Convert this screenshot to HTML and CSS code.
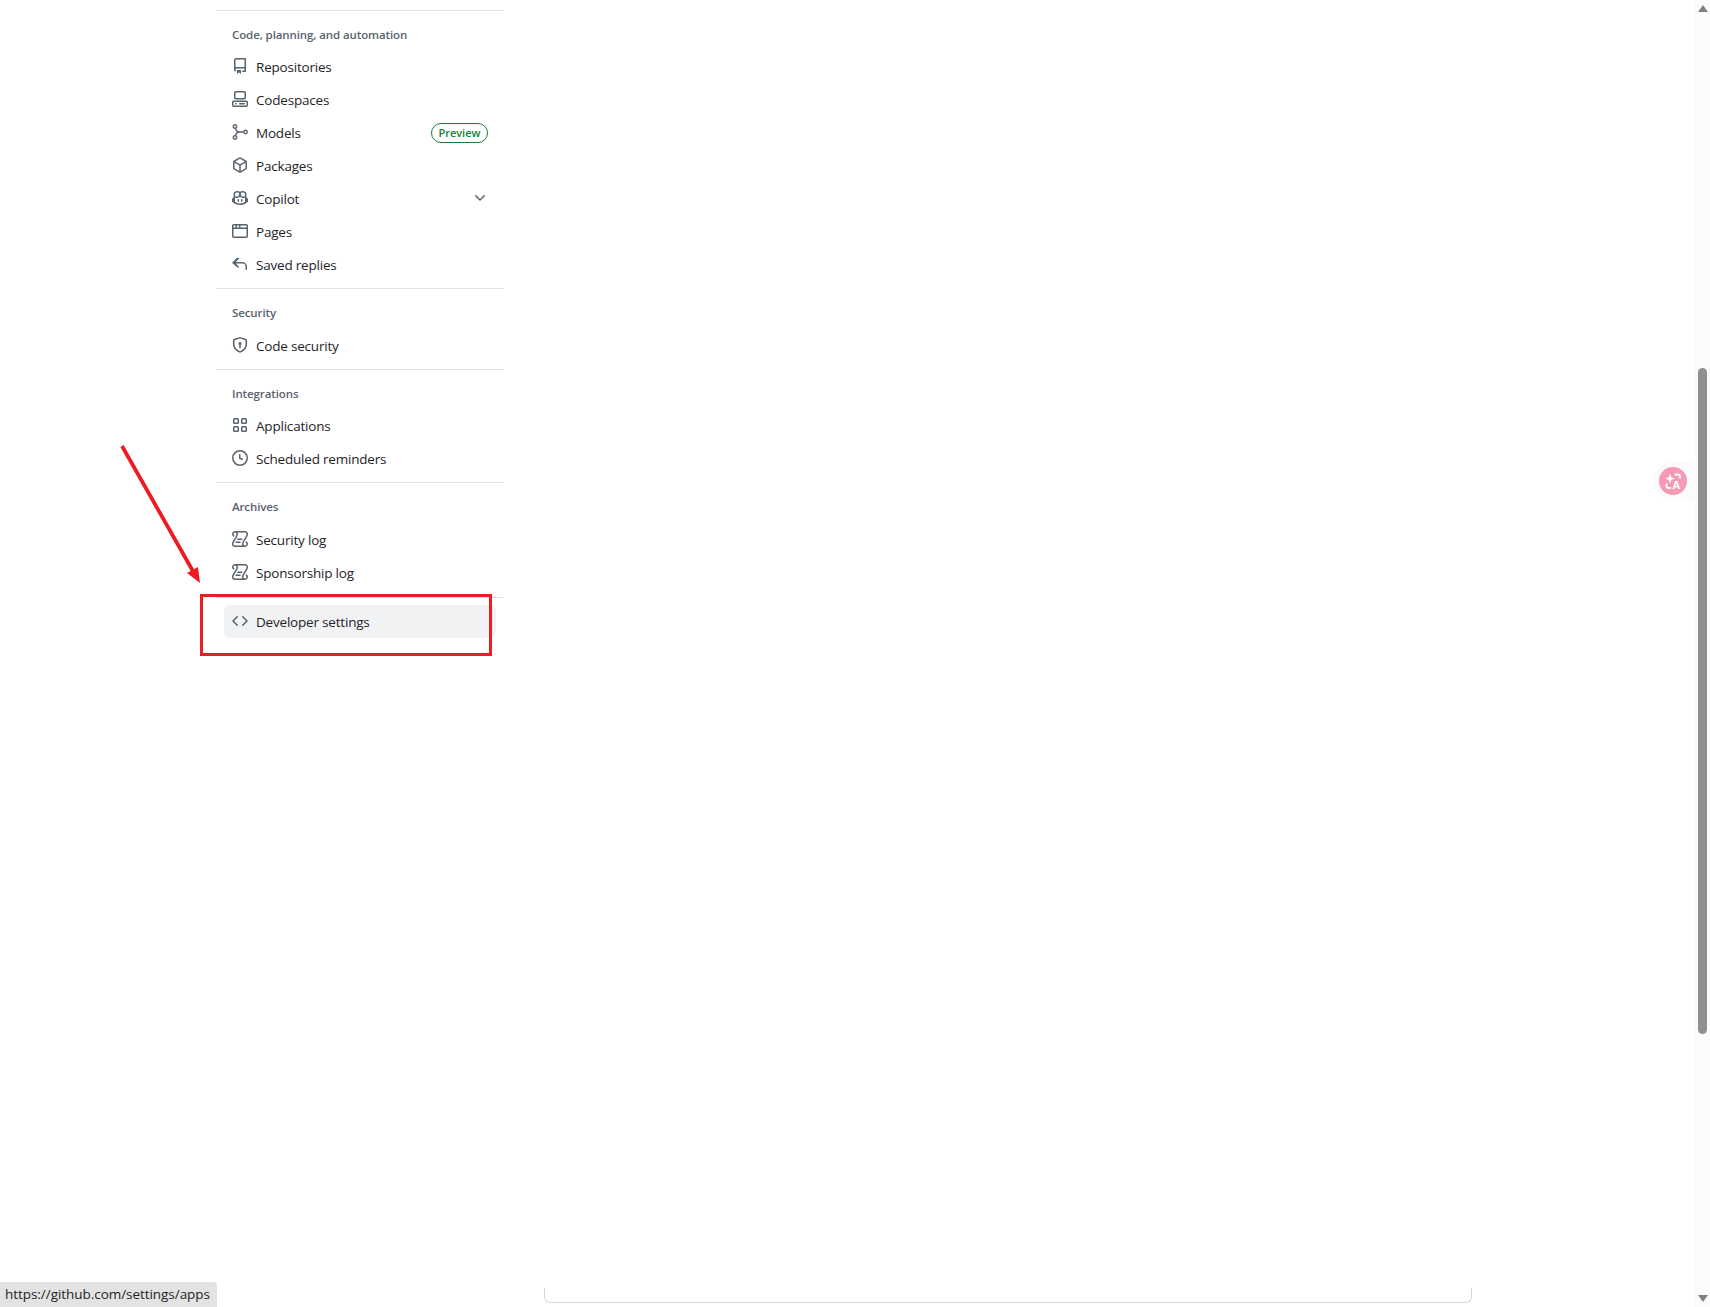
FILE: index.html
```html
<!DOCTYPE html>
<html lang="en">
<head>
<meta charset="utf-8">
<title>Settings</title>
<link rel="stylesheet" href="styles.css">
</head>
<body>
<div class="page">
  <main class="content">
    <nav class="sidebar">
      <section class="group">
        <h2 class="heading">Code, planning, and automation</h2>
        <a class="row"><svg class="icon" viewBox="0 0 16 16"><path d="M2 2.5A2.5 2.5 0 0 1 4.500 0h8.750a.75.75 0 0 1 .75.75v12.500a.75.75 0 0 1-.75.75h-2.500a.75.75 0 0 1 0-1.500h1.750v-2h-8a1 1 0 0 0-.714 1.700.75.75 0 1 1-1.072 1.050A2.495 2.495 0 0 1 2 11.500Zm10.500-1h-8a1 1 0 0 0-1 1v6.708A2.486 2.486 0 0 1 4.500 9h8ZM5 12.250a.25.25 0 0 1 .25-.25h3.500a.25.25 0 0 1 .25.25v3.250a.25.25 0 0 1-.4.2l-1.450-1.087a.249.249 0 0 0-.3 0L5.400 15.700a.25.25 0 0 1-.4-.2Z"/></svg><span>Repositories</span></a>
        <a class="row"><svg class="icon" viewBox="0 0 16 16"><path d="M0 11.250c0-.966.784-1.750 1.750-1.750h12.500c.966 0 1.750.784 1.750 1.750v3A1.750 1.750 0 0 1 14.250 16H1.750A1.750 1.750 0 0 1 0 14.250Zm2-9.500C2 .784 2.784 0 3.750 0h8.500C13.216 0 14 .784 14 1.750v5a1.750 1.750 0 0 1-1.750 1.750h-8.500A1.750 1.750 0 0 1 2 6.750Zm1.750-.25a.25.25 0 0 0-.25.25v5c0 .138.112.25.25.25h8.500a.25.25 0 0 0 .25-.25v-5a.25.25 0 0 0-.25-.25Zm-2 9.500a.25.25 0 0 0-.25.25v3c0 .138.112.25.25.25h12.500a.25.25 0 0 0 .25-.25v-3a.25.25 0 0 0-.25-.25Z"/><path d="M7 12.750a.75.75 0 0 1 .75-.75h4.500a.75.75 0 0 1 0 1.500h-4.500a.75.75 0 0 1-.75-.75Zm-4 0a.75.75 0 0 1 .75-.75h.5a.75.75 0 0 1 0 1.500h-.5a.75.75 0 0 1-.75-.75Z"/></svg><span>Codespaces</span></a>
        <a class="row"><svg class="icon icon-line" viewBox="0 0 16 16"><circle cx="3" cy="2.500" r="1.750"/><circle cx="3" cy="13.500" r="1.750"/><circle cx="13.500" cy="8" r="1.750"/><path d="M3.400 4.200C3.900 6.800 5.500 8 8 8h3.750M3.400 11.800C3.900 9.200 5.500 8 8 8"/></svg><span>Models</span><span class="badge">Preview</span></a>
        <a class="row"><svg class="icon" viewBox="0 0 16 16"><path d="m8.878.392 5.250 3.045c.54.314.872.890.872 1.514v6.098a1.750 1.750 0 0 1-.872 1.514l-5.250 3.045a1.750 1.750 0 0 1-1.756 0l-5.250-3.045A1.750 1.750 0 0 1 1 11.049V4.951c0-.624.332-1.201.872-1.514L7.122.392a1.750 1.750 0 0 1 1.756 0ZM7.875 1.690l-4.630 2.685L8 7.133l4.755-2.758-4.630-2.685a.248.248 0 0 0-.250 0ZM2.500 5.677v5.372c0 .09.047.171.125.216l4.625 2.683V8.432Zm6.250 8.271 4.625-2.683a.25.25 0 0 0 .125-.216V5.677L8.750 8.432Z"/></svg><span>Packages</span></a>
        <a class="row"><svg class="icon" viewBox="0 0 16 16"><path d="M7.998 15.035c-4.562 0-7.873-2.914-7.998-3.749V9.338c.085-.628.677-1.686 1.588-2.065.013-.07.024-.143.036-.218.029-.183.06-.384.126-.612-.201-.508-.254-1.084-.254-1.656 0-.87.128-1.769.693-2.484.579-.733 1.494-1.124 2.724-1.261 1.206-.134 2.262.034 2.944.765.05.053.096.108.139.165.044-.057.094-.112.143-.165.682-.731 1.738-.899 2.944-.765 1.23.137 2.145.528 2.724 1.261.566.715.693 1.614.693 2.484 0 .572-.053 1.148-.254 1.656.066.228.098.429.126.612.012.076.024.148.037.218.924.385 1.522 1.471 1.591 2.095v1.872c0 .766-3.351 3.795-8.002 3.795Zm0-1.485c2.28 0 4.584-1.11 5.002-1.433V7.862l-.023-.116c-.49.21-1.075.291-1.727.291-1.146 0-2.059-.327-2.71-.991A3.222 3.222 0 0 1 8 6.303a3.24 3.24 0 0 1-.544.743c-.65.664-1.563.991-2.71.991-.652 0-1.236-.081-1.727-.291l-.023.116v4.255c.419.323 2.722 1.433 5.002 1.433ZM6.762 2.83c-.193-.206-.637-.413-1.682-.297-1.019.113-1.479.404-1.713.7-.247.312-.369.789-.369 1.554 0 .793.129 1.171.308 1.371.162.181.519.379 1.442.379.853 0 1.339-.235 1.638-.54.315-.322.527-.827.617-1.553.117-.935-.037-1.395-.241-1.614Zm4.155-.297c-1.044-.116-1.488.091-1.681.297-.204.219-.359.679-.242 1.614.091.726.303 1.231.618 1.553.299.305.784.54 1.638.54.922 0 1.280-.198 1.442-.379.179-.2.308-.578.308-1.371 0-.765-.123-1.242-.37-1.554-.233-.296-.693-.587-1.713-.7Z"/><path d="M6.250 9.037a.75.75 0 0 1 .75.75v1.501a.75.75 0 0 1-1.500 0V9.787a.75.75 0 0 1 .75-.750Zm4.250.75v1.501a.75.75 0 0 1-1.500 0V9.787a.75.75 0 0 1 1.500 0Z"/></svg><span>Copilot</span><svg class="chevron" viewBox="0 0 16 16"><path d="M12.780 5.220a.749.749 0 0 1 0 1.060l-4.250 4.250a.749.749 0 0 1-1.060 0L3.220 6.280a.749.749 0 1 1 1.060-1.060L8 8.939l3.720-3.719a.749.749 0 0 1 1.060 0Z"/></svg></a>
        <a class="row"><svg class="icon" viewBox="0 0 16 16"><path d="M0 2.750C0 1.784.784 1 1.750 1h12.500c.966 0 1.750.784 1.750 1.750v10.500A1.750 1.750 0 0 1 14.250 15H1.750A1.750 1.750 0 0 1 0 13.250ZM14.500 6h-13v7.250c0 .138.112.25.25.25h12.500a.25.25 0 0 0 .25-.25Zm-6-3.500v2h6V2.750a.25.25 0 0 0-.25-.25ZM5 2.500v2h2v-2Zm-3.250 0a.25.25 0 0 0-.25.25V4.500h2v-2Z"/></svg><span>Pages</span></a>
        <a class="row"><svg class="icon" viewBox="0 0 16 16"><path d="M6.780 1.970a.75.75 0 0 1 0 1.060L3.810 6h6.440A4.750 4.750 0 0 1 15 10.750v2.500a.75.75 0 0 1-1.500 0v-2.500a3.250 3.250 0 0 0-3.250-3.250H3.810l2.970 2.970a.749.749 0 1 1-1.060 1.060L.470 7.280a.75.75 0 0 1 0-1.060l4.250-4.250a.75.75 0 0 1 1.060 0Z"/></svg><span>Saved replies</span></a>
      </section>
      <section class="group group-wide-head">
        <h2 class="heading">Security</h2>
        <a class="row"><svg class="icon" viewBox="0 0 16 16"><path d="M8.533.133a1.750 1.750 0 0 0-1.066 0l-5.250 1.680A1.750 1.750 0 0 0 1 3.480V7c0 1.566.320 3.182 1.303 4.682.983 1.498 2.585 2.813 5.032 3.855a1.700 1.700 0 0 0 1.330 0c2.447-1.042 4.049-2.357 5.032-3.855C14.680 10.182 15 8.566 15 7V3.480a1.750 1.750 0 0 0-1.217-1.667Zm-.610 1.429a.25.25 0 0 1 .153 0l5.250 1.680a.25.25 0 0 1 .174.238V7c0 1.358-.275 2.666-1.057 3.860-.784 1.194-2.121 2.340-4.366 3.297a.196.196 0 0 1-.154 0c-2.245-.956-3.582-2.104-4.366-3.298C2.775 9.666 2.500 8.360 2.500 7V3.480a.25.25 0 0 1 .174-.238ZM9.500 6.500a1.500 1.500 0 0 1-.750 1.299V10.500a.75.75 0 0 1-1.500 0V7.799A1.500 1.500 0 1 1 9.500 6.500Z"/></svg><span>Code security</span></a>
      </section>
      <section class="group">
        <h2 class="heading">Integrations</h2>
        <a class="row"><svg class="icon" viewBox="0 0 16 16"><path d="M1 2.500A1.500 1.500 0 0 1 2.500 1h3A1.500 1.500 0 0 1 7 2.500v3A1.500 1.500 0 0 1 5.500 7h-3A1.500 1.500 0 0 1 1 5.500Zm8 0A1.500 1.500 0 0 1 10.500 1h3A1.500 1.500 0 0 1 15 2.500v3A1.500 1.500 0 0 1 13.500 7h-3A1.500 1.500 0 0 1 9 5.500Zm-8 8A1.500 1.500 0 0 1 2.500 9h3A1.500 1.500 0 0 1 7 10.500v3A1.500 1.500 0 0 1 5.500 15h-3A1.500 1.500 0 0 1 1 13.500Zm8 0A1.500 1.500 0 0 1 10.500 9h3a1.500 1.500 0 0 1 1.500 1.500v3a1.500 1.500 0 0 1-1.500 1.500h-3A1.500 1.500 0 0 1 9 13.500ZM2.500 2.500v3h3v-3Zm8 0v3h3v-3Zm-8 8v3h3v-3Zm8 0v3h3v-3Z"/></svg><span>Applications</span></a>
        <a class="row"><svg class="icon" viewBox="0 0 16 16"><path d="M8 0a8 8 0 1 1 0 16A8 8 0 0 1 8 0ZM1.500 8a6.500 6.500 0 1 0 13 0 6.500 6.500 0 0 0-13 0Zm7-3.250v2.992l2.028.812a.75.75 0 0 1-.557 1.392l-2.500-1A.751.751 0 0 1 7 8.250v-3.500a.75.75 0 0 1 1.500 0Z"/></svg><span>Scheduled reminders</span></a>
      </section>
      <section class="group group-wide-head group-wide-foot">
        <h2 class="heading">Archives</h2>
        <a class="row"><svg class="icon" viewBox="0 0 16 16"><path d="M5 8.250a.75.75 0 0 1 .75-.75h4a.75.75 0 0 1 0 1.500h-4A.75.75 0 0 1 5 8.250ZM4 10.500A.75.75 0 0 0 4 12h4a.75.75 0 0 0 0-1.500H4Z"/><path d="M13-.005c1.654 0 3 1.328 3 3 0 .982-.338 1.933-.783 2.818-.443.879-1.028 1.758-1.582 2.588l-.011.017c-.568.853-1.104 1.659-1.501 2.446-.398.789-.623 1.494-.623 2.136a1.500 1.500 0 1 0 2.333-1.248.75.75 0 0 1 .834-1.246A3 3 0 0 1 13 16H3a3 3 0 0 1-3-3c0-1.582.891-3.135 1.777-4.506.209-.322.418-.637.623-.946.473-.709.923-1.386 1.293-2.050.546-.982.82-1.700.82-2.498a1.500 1.500 0 1 0-2.330 1.251.75.75 0 1 1-.84 1.243A3 3 0 0 1 3 0h10Zm0 1.500H5.500c.297.468.5 1.008.5 1.500 0 1.260-.45 2.316-1.003 3.312-.4.72-.907 1.480-1.400 2.220-.197.294-.391.587-.575.871C2.130 10.784 1.500 11.992 1.500 13A1.500 1.500 0 0 0 3 14.500h7.340c-.211-.451-.34-.952-.34-1.500 0-1 .354-1.966.781-2.813.43-.852 1.001-1.710 1.559-2.547l.032-.049c.568-.854 1.120-1.682 1.524-2.485.412-.816.604-1.486.604-2.106 0-.829-.672-1.500-1.500-1.500Z"/></svg><span>Security log</span></a>
        <a class="row"><svg class="icon" viewBox="0 0 16 16"><path d="M5 8.250a.75.75 0 0 1 .75-.75h4a.75.75 0 0 1 0 1.500h-4A.75.75 0 0 1 5 8.250ZM4 10.500A.75.75 0 0 0 4 12h4a.75.75 0 0 0 0-1.500H4Z"/><path d="M13-.005c1.654 0 3 1.328 3 3 0 .982-.338 1.933-.783 2.818-.443.879-1.028 1.758-1.582 2.588l-.011.017c-.568.853-1.104 1.659-1.501 2.446-.398.789-.623 1.494-.623 2.136a1.500 1.500 0 1 0 2.333-1.248.75.75 0 0 1 .834-1.246A3 3 0 0 1 13 16H3a3 3 0 0 1-3-3c0-1.582.891-3.135 1.777-4.506.209-.322.418-.637.623-.946.473-.709.923-1.386 1.293-2.050.546-.982.82-1.700.82-2.498a1.500 1.500 0 1 0-2.330 1.251.75.75 0 1 1-.84 1.243A3 3 0 0 1 3 0h10Zm0 1.500H5.500c.297.468.5 1.008.5 1.500 0 1.260-.45 2.316-1.003 3.312-.4.72-.907 1.480-1.400 2.220-.197.294-.391.587-.575.871C2.130 10.784 1.500 11.992 1.500 13A1.500 1.500 0 0 0 3 14.500h7.340c-.211-.451-.34-.952-.34-1.500 0-1 .354-1.966.781-2.813.43-.852 1.001-1.710 1.559-2.547l.032-.049c.568-.854 1.120-1.682 1.524-2.485.412-.816.604-1.486.604-2.106 0-.829-.672-1.500-1.500-1.500Z"/></svg><span>Sponsorship log</span></a>
      </section>
      <section class="group group-dev">
        <a class="row row-active"><svg class="icon" viewBox="0 0 16 16"><path d="m11.280 3.220 4.250 4.250a.75.75 0 0 1 0 1.060l-4.250 4.250a.749.749 0 1 1-1.060-1.060L13.940 8l-3.720-3.720a.749.749 0 1 1 1.060-1.060Zm-6.560 0a.751.751 0 0 1 1.060 1.060L2.060 8l3.720 3.720a.749.749 0 1 1-1.060 1.060L.470 8.530a.75.75 0 0 1 0-1.060Z"/></svg><span>Developer settings</span></a>
      </section>
    </nav>
    <div class="panel"></div>
  </main>
  <aside class="scrollbar">
    <span class="arrow-up"></span>
    <span class="thumb"></span>
    <span class="arrow-down"></span>
  </aside>
</div>
<svg class="arrow" viewBox="0 0 84 140"><line x1="2" y1="2" x2="74" y2="129" stroke="#ed1c24" stroke-width="3.800"/><polygon points="80,139 67,129 78,123" fill="#ed1c24"/></svg>
<div class="highlight"></div>
<div class="translate-dock">
  <button class="translate" aria-label="Translate"><svg viewBox="0 0 28 28"><path d="M11 6.500l1.300 3.700 3.700 1.300-3.700 1.300L11 16.500l-1.300-3.700L6 11.500l3.700-1.300Z" fill="#fff"/><path d="M15.500 7.500h3.500a2 2 0 0 1 2 2v2M7.500 16.500v2.500a2 2 0 0 0 2 2h2.500" fill="none" stroke="#fff" stroke-width="1.800"/><text x="13.500" y="22" class="translate-a">A</text></svg></button>
</div>
<div class="status">https://github.com/settings/apps</div>
</body>
</html>
```
FILE: styles.css
```css
* { box-sizing: border-box; }
html, body { margin: 0; height: 100%; background: #fff; overflow: hidden; }
body { font-family: "Open Sans", "Noto Sans", sans-serif; color: #1f2328; font-size: 13.5px; }
.page { display: flex; height: 1307px; }
.content { flex: 1; display: flex; flex-direction: column; justify-content: space-between; min-width: 0; }
.sidebar { width: 288px; margin: 10px 0 0 216px; }
.group { border-top: 1px solid #dfe4e9; padding: 8px 0 7px; }
.group-wide-head .heading { height: 32px; }
.group-wide-foot { padding-bottom: 8px; }
.group-dev { padding: 7px 0 0; }
.heading { margin: 0; padding: 8px 16px 0; height: 31px; font-size: 11.5px; font-weight: 600; color: #59636e; line-height: 16px; letter-spacing: -.1px; }
.row { display: flex; align-items: center; gap: 8px; height: 33px; margin: 0 8px; padding: 0 8px; border-radius: 6px; letter-spacing: -.2px; }
.row-active { background: #f1f2f4; }
.icon { width: 16px; height: 16px; margin-bottom: 1px; fill: #59636e; flex: none; }
.icon-line { fill: none; stroke: #59636e; stroke-width: 1.400; }
.badge { margin-left: auto; border: 1px solid #1a7f37; border-radius: 10px; height: 20px; padding: 0 6.500px; color: #1a7f37; font-size: 11px; font-weight: 600; line-height: 18px; letter-spacing: 0; }
.chevron { margin-left: auto; margin-bottom: 1px; width: 16px; height: 16px; fill: #59636e; }
.panel { width: 928px; height: 15px; margin: 0 0 4px 544px; border: 1px solid #d1d9e0; border-top: 0; border-radius: 0 0 6px 6px; }
.scrollbar { width: 15px; flex: none; background: #fbfbfb; position: relative; }
.thumb { position: absolute; left: 3px; top: 368px; width: 9px; height: 666px; border-radius: 5px; background: #8f8f8f; }
.arrow-up, .arrow-down { position: absolute; left: 3px; width: 0; height: 0; border-left: 5px solid transparent; border-right: 5px solid transparent; }
.arrow-up { top: 5px; border-bottom: 7px solid #7f7f7f; }
.arrow-down { bottom: 5px; border-top: 7px solid #7f7f7f; }
.arrow { position: absolute; left: 120px; top: 444px; width: 84px; height: 140px; overflow: visible; }
.highlight { position: absolute; left: 200px; top: 594px; width: 292px; height: 62px; border: 3px solid #ed1c24; }
.translate-dock { position: absolute; left: 1654px; top: 462px; width: 41px; height: 38px; padding: 5px; background: #fbfbfb; border-radius: 19px 0 0 19px; }
.translate { display: block; width: 28px; height: 28px; padding: 0; border: 0; border-radius: 50%; background: #f59ab5; }
.translate svg { display: block; width: 28px; height: 28px; }
.translate-a { fill: #fff; font: 700 11px "Open Sans", sans-serif; }
.status { position: fixed; left: 0; bottom: 0; width: 217px; height: 25px; padding: 0 5px; background: #e3e3e3; border-top-right-radius: 4px; font: 13.500px/25px "Open Sans", sans-serif; color: #1f1f1f; letter-spacing: -.05px; white-space: nowrap; }
```
